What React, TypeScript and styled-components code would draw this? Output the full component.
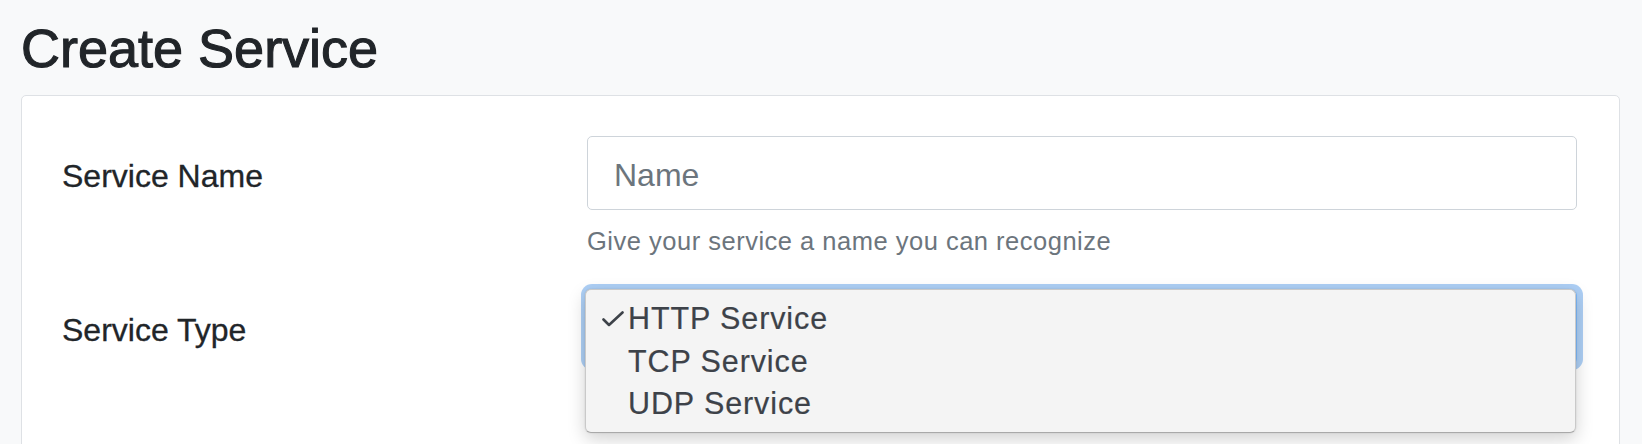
import React from 'react'
import styled, { createGlobalStyle } from 'styled-components'

const GlobalStyle = createGlobalStyle`
  html, body {
    margin: 0;
    padding: 0;
    background: #f8f9fa;
  }
  body {
    font-family: "Liberation Sans", Arial, Helvetica, sans-serif;
    color: #212529;
    overflow: hidden;
  }
`

const Page = styled.div`
  padding: 16px 22px 0 21px;
`

const Title = styled.h1`
  margin: 0 0 14px;
  font-size: 54px;
  line-height: 1.2;
  font-weight: 400;
  color: #212529;
  -webkit-text-stroke: 1.1px #212529;
`

const Card = styled.div`
  background: #fff;
  border: 1px solid #dee1e5;
  border-radius: 5px;
  padding: 40px 42px 120px 40px;
`

const FormRow = styled.div<{ gap?: number }>`
  display: grid;
  grid-template-columns: 525px 1fr;
  margin-bottom: ${(p) => p.gap ?? 0}px;
`

const Label = styled.label`
  box-sizing: border-box;
  height: 74px;
  padding-top: 7px;
  display: flex;
  align-items: center;
  font-size: 32px;
  color: #212529;
  -webkit-text-stroke: 0.3px #212529;
`

const Control = styled.div`
  position: relative;
`

const TextInput = styled.input`
  box-sizing: border-box;
  display: block;
  width: 100%;
  height: 74px;
  padding: 6px 26px 0;
  border: 1px solid #ced4da;
  border-radius: 5px;
  font-family: inherit;
  font-size: 32px;
  color: #495057;
  background: #fff;
  outline: none;
  &::placeholder {
    color: #6c757d;
  }
`

const HelpText = styled.small`
  display: block;
  margin-top: 14px;
  font-size: 25.5px;
  line-height: 1.4;
  letter-spacing: 0.5px;
  color: #6c757d;
`

const SelectBox = styled.div`
  box-sizing: border-box;
  height: 74px;
  border: 1px solid #80bdff;
  border-radius: 5px;
  background: #fff;
  box-shadow: 0 0 0 6px rgba(40, 130, 230, 0.38);
`

const Menu = styled.ul`
  position: absolute;
  top: -1px;
  left: -2px;
  right: 1px;
  box-sizing: border-box;
  height: 144px;
  margin: 0;
  padding: 7px 0 0;
  list-style: none;
  background: #f4f4f4;
  border: 1px solid #c9c9c9;
  border-bottom-color: #a9a9a9;
  border-radius: 6px;
  box-shadow: 0 6px 18px rgba(0, 0, 0, 0.18), 0 0 2px rgba(0, 0, 0, 0.12);
`

const Option = styled.li`
  display: flex;
  align-items: center;
  height: 42.5px;
  font-size: 30.5px;
  letter-spacing: 0.9px;
  color: #3d4249;
  -webkit-text-stroke: 0.2px #3d4249;
`

const CheckSlot = styled.span`
  width: 42px;
  flex: none;
  display: flex;
  align-items: center;
  padding-left: 16px;
  box-sizing: border-box;
`

const Check = () => (
  <svg width="22" height="16" viewBox="0 0 22 16" fill="none">
    <path d="M1.5 8.5 L7 14 L20.5 1.5" stroke="#3d4249" strokeWidth="2.6" strokeLinecap="round" strokeLinejoin="round" />
  </svg>
)

const serviceTypes = ['HTTP Service', 'TCP Service', 'UDP Service']

export default function App() {
  const selected = serviceTypes[0]
  return (
    <Page>
      <GlobalStyle />
      <Title>Create Service</Title>
      <Card>
        <FormRow gap={31}>
          <Label htmlFor="service-name">Service Name</Label>
          <Control>
            <TextInput id="service-name" placeholder="Name" />
            <HelpText>Give your service a name you can recognize</HelpText>
          </Control>
        </FormRow>
        <FormRow>
          <Label>Service Type</Label>
          <Control>
            <SelectBox />
            <Menu>
              {serviceTypes.map((t) => (
                <Option key={t}>
                  <CheckSlot>{t === selected ? <Check /> : null}</CheckSlot>
                  {t}
                </Option>
              ))}
            </Menu>
          </Control>
        </FormRow>
      </Card>
    </Page>
  )
}
